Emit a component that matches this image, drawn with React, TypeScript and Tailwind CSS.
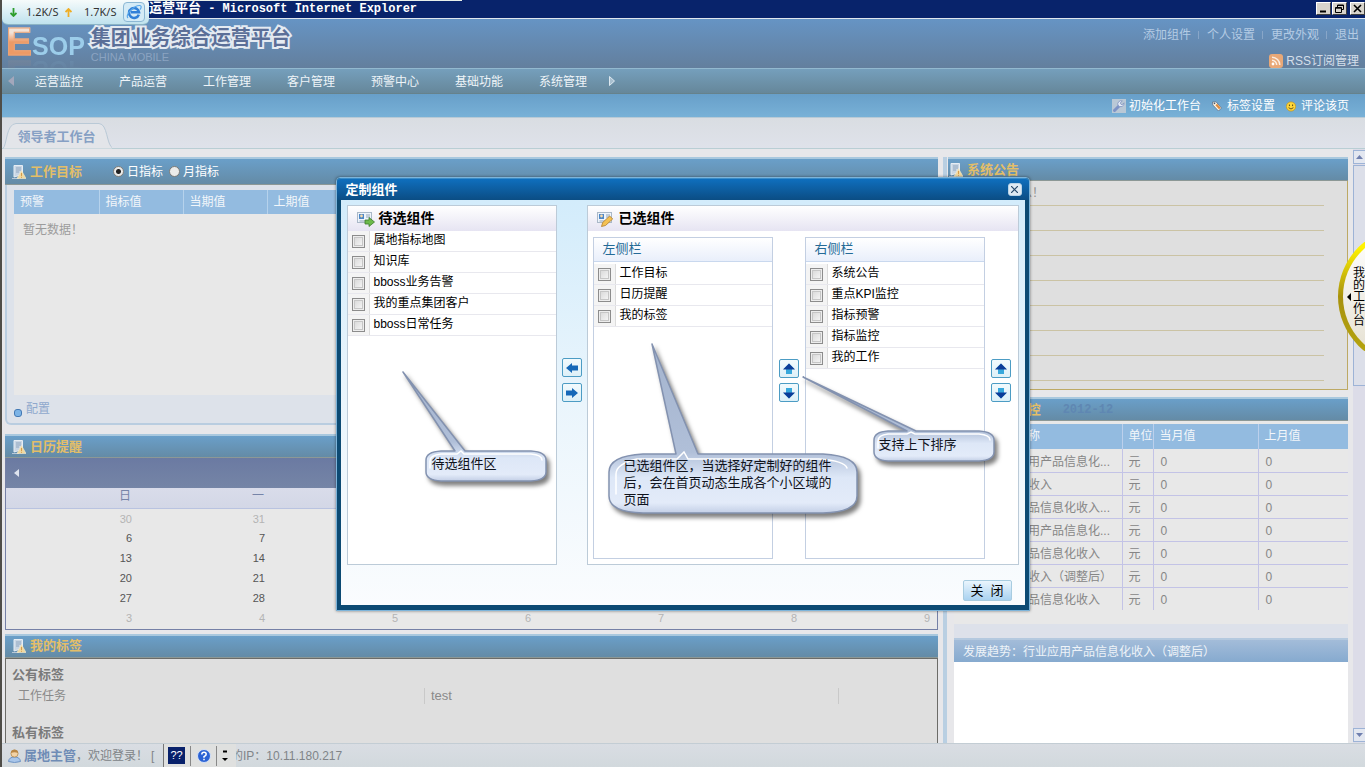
import React from "react";

const weekdays = ["日", "一", "二", "三", "四", "五", "六"];
const weeks = [
  [30, 31, 1, 2, 3, 4, 5],
  [6, 7, 8, 9, 10, 11, 12],
  [13, 14, 15, 16, 17, 18, 19],
  [20, 21, 22, 23, 24, 25, 26],
  [27, 28, 29, 30, 31, 1, 2],
  [3, 4, 5, 6, 7, 8, 9],
];
const kpis = [
  "行业应用产品信息化...",
  "信息化收入",
  "行业产品信息化收入...",
  "行业应用产品信息化...",
  "行业产品信息化收入",
  "信息化收入（调整后）",
  "行业产品信息化收入",
];
const menu = ["运营监控", "产品运营", "工作管理", "客户管理", "预警中心", "基础功能", "系统管理"];
const account = ["添加组件", "个人设置", "更改外观", "退出"];

function SheetIcon() {
  return (
    <svg className="h-[14px] w-[14px] shrink-0" viewBox="0 0 14 14">
      <path d="M2 0.5h8.500v9L2 12z" fill="#c9d6e4" stroke="#e6edf4" />
      <path d="M4 3h5M4 5h5M4 7h3" stroke="#8fa6bf" />
      <path d="M0 13.500h7" stroke="#b8c8d8" />
      <path d="M9.500 5.500 14 13.500H5z" fill="#f0d9a0" stroke="#f7ecd0" strokeWidth=".6" />
      <path d="M9.500 8v3M9.500 11.800v1" stroke="#d79a4a" />
    </svg>
  );
}

function PanelHeader({ title, className = "", children }: { title: string; className?: string; children?: React.ReactNode }) {
  return (
    <div
      className={
        "flex shrink-0 items-center border-t-2 border-b border-t-[#a9c8de] border-b-[#8c9896] bg-linear-to-b from-[#6a9fc9] to-[#648ba6] " +
        className
      }
    >
      <SheetIcon />
      <h2 className="ml-1 text-[13px] leading-4 font-bold whitespace-nowrap text-[#e3be68]">{title}</h2>
      {children}
    </div>
  );
}

function TitleBar() {
  const box =
    "flex h-[13px] w-[15px] items-center justify-center border border-t-white border-l-white border-r-[#404040] border-b-[#404040] bg-[#d8d4cc]";
  return (
    <div className="relative flex h-[19px] shrink-0 items-center border-b border-[#dfe6ee] bg-[#08236b] pl-[147px] text-white">
      <div className="absolute top-0 left-0 h-px w-[460px] bg-[#e8efe9]" />
      <h1 className="flex items-center font-['Liberation_Mono','Noto_Sans_CJK_SC',monospace] text-[12px] leading-4 font-bold whitespace-pre">
        <span className="text-[13px]">运营平台</span>
        <span> - Microsoft Internet Explorer</span>
      </h1>
      <div className="absolute top-0 left-0 z-10 flex h-[25px] w-[147px] items-center rounded-b-md rounded-tr-sm border-b border-[#8cb4c4] bg-linear-to-b from-[#f6fbfb] to-[#bfe2ee] pl-2 font-['Noto_Sans',sans-serif] text-[11px] text-[#333]">
        <svg className="h-[9px] w-[7px]" viewBox="0 0 7 9">
          <path d="M3.500 0v8M.5 5l3 3 3-3" fill="none" stroke="#2e9e2e" strokeWidth="1.800" />
        </svg>
        <span className="ml-[9px] w-[35px]">1.2K/S</span>
        <svg className="ml-1 h-[9px] w-[7px]" viewBox="0 0 7 9">
          <path d="M3.500 9V1.500M.5 4l3-3 3 3" fill="none" stroke="#efae26" strokeWidth="1.800" />
        </svg>
        <span className="ml-3 w-[34px]">1.7K/S</span>
        <span className="ml-[5px] flex h-5 w-[22px] items-center justify-center rounded-sm border border-[#8cb8d4] bg-[#d4ebf6]">
          <svg className="h-4 w-4" viewBox="0 0 16 16">
            <path d="M12.800 10.600A5 5 0 1 1 13 8.200H5" fill="none" stroke="#2f80d8" strokeWidth="2.600" />
            <path d="M2 14C-1 11 8 1 14 1.500c2 .4 1 3 0 4" fill="none" stroke="#5aa8ea" strokeWidth="1.200" />
          </svg>
        </span>
      </div>
      <div className="mb-px ml-auto flex">
        <button aria-label="最小化" className={box}>
          <svg className="h-[9px] w-[9px]" viewBox="0 0 9 9"><path d="M1 7.500h6" stroke="#000" strokeWidth="2" /></svg>
        </button>
        <button aria-label="还原" className={box + " ml-px"}>
          <svg className="h-[9px] w-[9px]" viewBox="0 0 9 9" fill="none" stroke="#000">
            <path d="M2.500 3V1h6v4.500H6.500M2.500 1.500h6" />
            <path d="M.5 3.500h6v5h-6zM.5 4.200h6" />
          </svg>
        </button>
        <button aria-label="关闭窗口" className={box + " ml-[3px]"}>
          <svg className="h-[9px] w-[9px]" viewBox="0 0 9 9"><path d="m1 1 7 7M8 1 1 8" stroke="#000" strokeWidth="1.600" /></svg>
        </button>
      </div>
    </div>
  );
}

function Banner() {
  return (
    <header className="flex h-[49px] shrink-0 justify-between bg-linear-to-b from-[#6694c4] to-[#637f9d] pr-[6px] pl-1">
      <div className="flex">
        <div className="flex items-baseline font-bold text-[#9ccdea] [-webkit-box-reflect:below_-20px_linear-gradient(transparent_50%,rgba(0,0,0,0.2))]">
          <span className="bg-linear-to-b from-[#f3e3d8] from-30% to-[#ec9a66] to-50% bg-clip-text text-[39px] leading-[46px] text-transparent [-webkit-text-stroke:1px_#eba477]">E</span>
          <span className="text-[25px] leading-[46px]">SOP</span>
        </div>
        <div className="ml-[6px] pt-[7px]">
          <div className="text-[20px] leading-6 font-bold text-[#5b6f98] [-webkit-text-stroke:4px_#e4ebf2] [paint-order:stroke_fill]">
            集团业务综合运营平台
          </div>
          <div className="mt-px text-[11px] leading-3 text-[#8ba3c1]">CHINA MOBILE</div>
        </div>
      </div>
      <div className="flex flex-col items-end pt-2 text-[#b4cbe4]">
        <div className="flex items-center leading-4">
          {account.map((a, i) => (
            <React.Fragment key={a}>
              {i > 0 && <i className="mr-2 ml-[7px] h-2 w-px bg-[#88a6c8]" />}
              <a href="#">{a}</a>
            </React.Fragment>
          ))}
        </div>
        <a href="#" className="mt-[10px] flex items-center gap-[3px] leading-4 text-[#d5dfea]">
          <svg className="h-[14px] w-[14px]" viewBox="0 0 14 14">
            <rect width="14" height="14" rx="3" fill="#e9a877" />
            <circle cx="4" cy="10" r="1.400" fill="#fff" />
            <path d="M3 6.300A4.700 4.700 0 0 1 7.700 11M3 3.200A7.800 7.800 0 0 1 10.800 11" fill="none" stroke="#fbeee2" strokeWidth="1.500" />
          </svg>
          RSS订阅管理
        </a>
      </div>
    </header>
  );
}

function NavBar() {
  return (
    <nav className="flex h-[26px] shrink-0 items-center border-t border-b border-t-[#93b9cf] border-b-[#66828c] bg-linear-to-b from-[#759fbc] to-[#66879a] pl-[6px] text-[#eef4f8]">
      <svg className="h-[10px] w-[6px]" viewBox="0 0 6 10"><path d="M6 0v10L0 5z" fill="#a3a7bb" /></svg>
      <div className="ml-[21px] flex gap-9 pt-px">
        {menu.map((m) => (
          <a key={m} href="#" className="leading-4">{m}</a>
        ))}
      </div>
      <svg className="ml-[22px] h-[10px] w-[6px]" viewBox="0 0 6 10"><path d="M.5.5v9L5.500 5z" fill="#a9c0d0" stroke="#dde8f0" /></svg>
    </nav>
  );
}

function ToolBar() {
  return (
    <div className="flex h-[23px] shrink-0 items-center justify-end bg-linear-to-b from-[#689fc9] to-[#78b1d7] pt-px pr-4 leading-4 text-white">
      <a href="#" className="flex items-center gap-[3px]">
        <svg className="h-[14px] w-[14px]" viewBox="0 0 14 14">
          <rect width="14" height="14" fill="#b9c8d6" />
          <path d="m2.500 11.500 5-5" stroke="#7d93c6" strokeWidth="3" strokeLinecap="round" />
          <path d="M12 3.800 9.800 6 8 4.200 10.300 2A3.300 3.300 0 0 0 6 6.200 3.300 3.300 0 0 0 12 3.800z" fill="#e8eefa" stroke="#7286b8" strokeWidth=".7" />
        </svg>
        初始化工作台
      </a>
      <a href="#" className="ml-[11px] flex items-center gap-[5px]">
        <svg className="h-[11px] w-[10px]" viewBox="0 0 10 11">
          <path d="M.5 1 4 .8 9.500 7 6.500 10 .8 4z" fill="#fdf5e4" stroke="#5d6f86" strokeWidth=".8" />
          <path d="m4.200 3.500 3.600 4" stroke="#e08a3c" strokeWidth="2.200" />
          <circle cx="2.500" cy="2.400" r=".8" fill="#45566c" />
        </svg>
        标签设置
      </a>
      <a href="#" className="ml-[11px] flex items-center gap-[5px]">
        <svg className="h-[11px] w-[10px]" viewBox="0 0 10 10">
          <circle cx="5" cy="5" r="4.600" fill="#ffd83a" stroke="#c99414" strokeWidth=".7" />
          <path d="M3.400 3v1.600M6.600 3v1.600" stroke="#5b4510" />
          <path d="M2.600 6.200q2.400 2.600 4.800 0" fill="none" stroke="#5b4510" strokeWidth=".9" />
        </svg>
        评论该页
      </a>
    </div>
  );
}

function TabStrip() {
  return (
    <div className="flex h-8 shrink-0 items-end border-t border-b border-t-[#b8cad6] border-b-[#b9ced4] bg-linear-to-b from-[#d9dde2] to-[#dfe2ea]">
      <button className="relative -mb-px h-[26px] w-[110px] pt-px pr-px text-[13px] font-bold text-[#86a0c4]">
        <svg className="absolute inset-0 h-full w-full" viewBox="0 0 110 26">
          <path d="M1 25.500C5 22 4 1 14 .5h83c9 .5 7 21 14 25" fill="#e3e5e9" stroke="#b9c9d6" />
        </svg>
        <span className="relative">领导者工作台</span>
      </button>
    </div>
  );
}

function GoalsPanel() {
  return (
    <section>
      <PanelHeader title="工作目标" className="h-7 pl-[7px]">
        <div className="ml-[31px] flex items-center text-[12px] text-white">
          {["日指标", "月指标"].map((l, i) => (
            <label key={l} className="mr-[6px] flex items-center gap-[3px]">
              <input
                type="radio"
                name="period"
                defaultChecked={i === 0}
                className="h-[11px] w-[11px] appearance-none rounded-full border border-[#7b7b78] bg-[#ececea] checked:bg-[radial-gradient(circle,#222_0_2px,#ececea_3px)]"
              />
              {l}
            </label>
          ))}
        </div>
      </PanelHeader>
      <div className="h-60 rounded-b-md border-2 border-t-0 border-[#b9cde0] bg-[#dde2ea] pt-[5px] pl-[7px]">
        <table className="w-full table-fixed border-collapse">
          <thead>
            <tr className="h-6 bg-[#93bbe0] text-left text-[#f2f6fa]">
              {["预警", "指标值", "当期值", "上期值"].map((h, i) => (
                <th key={h} className={"border-r border-[#b6d2ec] pl-[6px] font-normal " + (i === 0 ? "w-[85px]" : "w-[84px]")}>{h}</th>
              ))}
              <th />
            </tr>
          </thead>
          <tbody>
            <tr className="h-[181px] bg-[#e8e8e8] align-top text-[#9c9c9c]">
              <td colSpan={5} className="pt-2 pl-[9px] leading-4">暂无数据！</td>
            </tr>
          </tbody>
        </table>
        <a href="#" className="flex h-[28px] items-center gap-1 text-[#8fa9cd]">
          <svg className="mt-2 h-2 w-2" viewBox="0 0 8 8"><rect x=".5" y=".5" width="7" height="7" rx="2.500" fill="#7db4e6" stroke="#4479b4" /></svg>
          配置
        </a>
      </div>
    </section>
  );
}

function CalendarPanel() {
  return (
    <section className="mt-[9px]">
      <PanelHeader title="日历提醒" className="h-6 pl-[7px]" />
      <div className="border border-t-0 border-[#7580a6] bg-[#e8e8e8]">
        <div className="flex h-[30px] items-center bg-linear-to-b from-[#6b7aa2] to-[#7585a6] pl-2">
          <button aria-label="上个月">
            <svg className="h-2 w-[5px]" viewBox="0 0 5 8"><path d="M5 0v8L0 4z" fill="#dfe4ee" /></svg>
          </button>
        </div>
        <table className="w-full table-fixed border-collapse text-right">
          <thead>
            <tr className="h-5 border-b border-[#b9c3e0] bg-linear-to-b from-[#d9dcea] to-[#d3d7e6] text-[#7684a8]">
              {weekdays.map((d) => (
                <th key={d} className="pr-2 pb-1 leading-4 font-normal">{d}</th>
              ))}
            </tr>
          </thead>
          <tbody className="text-[11px] text-[#555]">
            {weeks.map((w, r) => (
              <tr key={r} className="h-5">
                {w.map((d, c) => {
                  const outside = (r === 0 && d > 20) || (r > 3 && d < 20);
                  return (
                    <td key={c} className={"pr-[7px] " + (outside ? "text-[#b4b4b4]" : "")}>{d}</td>
                  );
                })}
              </tr>
            ))}
          </tbody>
        </table>
      </div>
    </section>
  );
}

function TagsPanel() {
  return (
    <section className="mt-1 flex min-h-0 flex-1 flex-col">
      <PanelHeader title="我的标签" className="h-6 pl-[7px]" />
      <div className="min-h-0 flex-1 overflow-hidden border border-b-0 border-[#6c6c68] bg-[#dfdfdf] px-[6px] pt-2 text-[#8a8a8a]">
        <h3 className="text-[13px] leading-4 font-bold text-[#7a7a7a]">公有标签</h3>
        <div className="mt-1 flex items-center pl-[6px] leading-[18px]">
          <a href="#" className="w-[406px]">工作任务</a>
          <i className="h-4 w-px bg-[#c9c9c9]" />
          <a href="#" className="w-[413px] pl-[6px] text-[13px]">test</a>
          <i className="h-4 w-px bg-[#c9c9c9]" />
        </div>
        <h3 className="mt-5 text-[13px] leading-4 font-bold text-[#7a7a7a]">私有标签</h3>
      </div>
    </section>
  );
}

function RightColumn() {
  return (
    <aside className="flex w-[400px] shrink-0 flex-col">
      <PanelHeader title="系统公告" className="h-6 pl-px" />
      <div className="border border-t-0 border-[#bda964] bg-[#dfdfdf] pr-[23px] pb-2 pl-[11px]">
        {Array.from({ length: 8 }, (_, i) => (
          <div key={i} className="h-[25px] border-b border-[#cbc3a4] leading-6 text-[#909090]">
            {i === 0 ? "暂无公告信息！" : ""}
          </div>
        ))}
      </div>
      <PanelHeader title="重点KPI监控" className="mt-[7px] h-6 pl-px">
        <span className="ml-[22px] font-['Liberation_Mono',monospace] font-bold text-[#5f87b2]">2012-12</span>
      </PanelHeader>
      <div className="ml-[6px] border-b-[14px] border-[#dde1ea] bg-[#e8e8e8] pt-[3px] pb-[14px] text-[#868686]">
        <table className="w-full table-fixed border-collapse">
          <thead>
            <tr className="h-[25px] bg-[#93bbe0] text-left text-[#f2f6fa]">
              <th className="w-[168px] border-r border-[#bcd0ec] pb-[2px] pl-[38px] font-normal">指标名称</th>
              <th className="w-[31px] border-r border-[#bcd0ec] pb-[2px] pl-[6px] font-normal whitespace-nowrap">单位</th>
              <th className="w-[105px] border-r border-[#bcd0ec] pb-[2px] pl-[6px] font-normal">当月值</th>
              <th className="pb-[2px] pl-[6px] font-normal">上月值</th>
            </tr>
          </thead>
          <tbody>
            {kpis.map((k, i) => (
              <tr key={i} className={"h-[23px] " + (i < 6 ? "border-b border-[#c3c3e6]" : "")}>
                <td className="border-r border-[#c3c3e6] pt-[3px] pl-[38px] whitespace-nowrap">{k}</td>
                <td className="border-r border-[#c3c3e6] pt-[3px] pl-[6px]">元</td>
                <td className="border-r border-[#c3c3e6] pt-[3px] pl-[7px]">0</td>
                <td className="pt-[3px] pl-[7px]">0</td>
              </tr>
            ))}
          </tbody>
        </table>
      </div>
      <div className="ml-[6px] flex min-h-0 flex-1 flex-col">
        <h3 className="flex h-6 shrink-0 items-center border-t-2 border-[#b4c9df] bg-linear-to-b from-[#a3bcd9] to-[#86aacf] pt-px pl-[9px] text-[#eef3f8]">
          发展趋势：行业应用产品信息化收入（调整后）
        </h3>
        <div className="flex-1 bg-white" />
      </div>
    </aside>
  );
}

function SideScroll() {
  return (
    <div className="-mt-2 ml-[5px] flex w-3 shrink-0 flex-col bg-[#dcdce8]">
      <div className="mt-px flex h-[14px] items-center justify-center border border-r-0 border-[#9db3d6] bg-[#e3e7f0]">
        <svg className="h-1 w-[7px]" viewBox="0 0 7 4"><path d="M0 4h7L3.500 0z" fill="#6f7fae" /></svg>
      </div>
      <div className="mt-px h-[221px] border border-r-0 border-[#9db3d6] bg-[#dcdfe9]" />
      <div className="mt-auto mb-px flex h-[14px] items-center justify-center border border-r-0 border-[#9db3d6] bg-[#e3e7f0]">
        <svg className="h-1 w-[7px]" viewBox="0 0 7 4"><path d="M0 0h7L3.500 4z" fill="#6f7fae" /></svg>
      </div>
    </div>
  );
}

function StatusBar() {
  return (
    <footer className="flex h-6 shrink-0 items-center border-t border-[#c3cdd4] bg-linear-to-b from-[#d9dde3] to-[#d2d9dd] pl-[6px] whitespace-nowrap text-[#808488]">
      <svg className="h-[14px] w-[13px]" viewBox="0 0 13 14">
        <path d="M.5 12.500Q1 8 6.500 8t6 4.500Q6.500 14.500 .5 12.500z" fill="#a9c6ea" stroke="#6d93c4" />
        <circle cx="6.500" cy="4.500" r="3.600" fill="#f3d3a6" stroke="#b58a4e" strokeWidth=".8" />
        <path d="M3 4Q3 .8 6.500 .8T10 4Q6.500 2.500 3 4z" fill="#b98746" />
      </svg>
      <a href="#" className="ml-[3px] text-[13px] font-bold text-[#6f8cb6]">属地主管</a>
      <span>，欢迎登录！</span>
      <span className="ml-[3px] w-3">[</span>
      <div className="relative flex h-full w-[73px] items-center gap-[5px] border-l border-[#777] bg-[#dfe0df] pl-1">
        <button className="h-[17px] w-[17px] bg-[#08216b] text-[11px] leading-[17px] text-white">??</button>
        <i className="h-5 w-px bg-[#888]" />
        <button aria-label="帮助" className="ml-px">
          <svg className="h-[14px] w-[14px]" viewBox="0 0 14 14">
            <circle cx="7" cy="7" r="6.500" fill="#2a62d4" stroke="#d5e2f8" />
            <path d="M4.800 5.500Q4.800 3.300 7 3.300t2.200 2Q9.200 6.600 7 7.600v1.100M7 9.700v1.500" fill="none" stroke="#fff" strokeWidth="1.500" />
          </svg>
        </button>
        <i className="h-5 w-px bg-[#888]" />
        <svg className="h-3 w-[7px]" viewBox="0 0 7 12"><path d="M1 1.500h4" stroke="#000" strokeWidth="2" /><path d="M0 8h6l-3 3z" fill="#000" /></svg>
      </div>
      <span className="-ml-[5px]">的IP：10.11.180.217</span>
    </footer>
  );
}

function DialogIcon({ kind }: { kind: "add" | "edit" }) {
  return (
    <svg className="h-4 w-[18px]" viewBox="0 0 18 16">
      <rect x=".5" y="1.500" width="14" height="10" fill="#eef4fb" stroke="#aab8c8" />
      <rect x="2" y="3" width="5" height="5" fill="#4d87c7" />
      <circle cx="4.500" cy="5" r="1.400" fill="#f5d9ac" />
      <path d="M9 4h4M9 6h4M2.500 10h6" stroke="#93a4b8" />
      {kind === "add" ? (
        <path d="M8 9h4V6.500l5.500 4.500-5.500 4.500V13H8z" fill="#6cba4c" stroke="#3c7c2c" strokeWidth=".8" />
      ) : (
        <path d="m4.500 15.500 1.200-4 7-6.500 3 3-7.200 6.500z" fill="#f4c153" stroke="#b17d2b" strokeWidth=".8" />
      )}
    </svg>
  );
}

function CheckList({ items }: { items: string[] }) {
  return (
    <ul>
      {items.map((t) => (
        <li key={t} className="h-[21px] border-b border-[#e8e8ee]">
          <label className="flex h-full items-center">
            <span className="flex h-full w-[22px] items-center border-r border-[#dcdcdc] bg-[#f4f4f4] pl-1">
              <input
                type="checkbox"
                className="h-[13px] w-[13px] appearance-none border border-[#8c8c8c] bg-linear-to-br from-[#d4d4d4] to-[#fbfbfb] shadow-[inset_0_0_0_1px_#ededed,inset_0_0_0_2px_#c6c6c6] checked:bg-[#3a78b8]"
              />
            </span>
            <span className="pb-[2px] pl-1 leading-4">{t}</span>
          </label>
        </li>
      ))}
    </ul>
  );
}

const arrows = {
  left: "M2 8 8 3v2.500h6v5H8V13z",
  right: "M14 8 8 3v2.500H2v5h6V13z",
  up: "M8 2.500 13.500 8H11v5H5V8H2.500z",
  down: "M8 13.500 13.500 8H11V3H5v5H2.500z",
};

function ArrowButton({ dir, label }: { dir: keyof typeof arrows; label: string }) {
  const lateral = dir === "left" || dir === "right";
  return (
    <button
      aria-label={label}
      className="flex h-[19px] w-5 items-center justify-center rounded-[2px] border border-[#4c9cc4] bg-linear-to-b from-[#f2fafd] to-[#ddf0f8]"
    >
      <svg className="h-4 w-4" viewBox="0 0 16 16">
        <path d={arrows[dir]} fill={lateral ? "#1668b8" : "#38a8dc"} />
        {dir === "up" && <path d="M8 2.500 14 8.500H2z" fill="#0c3c98" />}
        {dir === "down" && <path d="M8 13.500 14 7.500H2z" fill="#0c3c98" />}
      </svg>
    </button>
  );
}

function SideList({ title, items }: { title: string; items: string[] }) {
  return (
    <div className="h-[322px] w-[180px] border border-[#c3cfe2] bg-white">
      <h4 className="mb-[2px] h-6 border-b border-[#c9d8ee] bg-linear-to-b from-white to-[#e9effb] pl-[9px] text-[13px] leading-[22px] text-[#246a96]">
        {title}
      </h4>
      <CheckList items={items} />
    </div>
  );
}

interface CalloutProps {
  id: string;
  place: string;
  size: string;
  view: string;
  shape: string;
  gloss: string;
  text: React.ReactNode;
  textPlace: string;
}

function Callout({ id, place, size, view, shape, gloss, text, textPlace }: CalloutProps) {
  return (
    <div className={"pointer-events-none absolute " + place + " " + size}>
      <svg className="absolute inset-0 h-full w-full overflow-visible drop-shadow-[3px_4px_2px_rgba(0,0,0,0.5)]" viewBox={view}>
        <defs>
          <linearGradient id={id} x1="0" y1="0" x2="0" y2="1">
            <stop offset="0" stopColor="#a4b4ce" />
            <stop offset=".64" stopColor="#b0bfd8" />
            <stop offset=".79" stopColor="#dde7f7" />
            <stop offset=".94" stopColor="#e3ebf9" />
            <stop offset="1" stopColor="#c3cfe6" />
          </linearGradient>
        </defs>
        <path d={shape} fill={"url(#" + id + ")"} stroke="#8392b0" strokeWidth="1.500" strokeLinejoin="round" />
        <path d={gloss} fill="none" stroke="#fff" strokeWidth="1.500" strokeLinecap="round" />
      </svg>
      <p className={"absolute text-[13px] leading-[17px] text-[#10131c] " + textPlace}>{text}</p>
    </div>
  );
}

function WidgetDialog() {
  return (
    <div
      role="dialog"
      aria-label="定制组件"
      className="absolute top-[177px] left-1/2 z-20 -ml-px w-[694px] -translate-x-1/2 rounded-t-sm border border-[#7db4da] bg-[#0c4a73] px-1 pb-[5px] text-black shadow-[0_0_3px_rgba(0,0,0,0.5)]"
    >
      <div className="-mx-1 flex h-[22px] items-center justify-between rounded-t-sm border-t border-[#3a8cc8] bg-linear-to-b from-[#0f6fbe] to-[#0b4d84] pr-[7px] pl-[9px]">
        <h2 className="text-[13px] font-bold text-white">定制组件</h2>
        <button aria-label="关闭" className="flex h-[13px] w-[14px] items-center justify-center rounded-[3px] border border-[#b9d4e8] bg-[#dfeaf3]">
          <svg className="h-[7px] w-[7px]" viewBox="0 0 7 7"><path d="m0 0 7 7M7 0 0 7" stroke="#27496b" strokeWidth="1.200" /></svg>
        </button>
      </div>
      <div className="bg-linear-to-b from-[#d3ecfb] via-[#eaf5fc] to-[#fafcfe] px-[6px] pt-[5px] pb-1">
        <div className="flex">
          <section className="h-[360px] w-[210px] border border-[#bccbd8] bg-white">
            <h3 className="flex h-[25px] items-center gap-1 bg-linear-to-b from-white to-[#e6e4f2] pl-[9px] text-[14px] font-bold">
              <DialogIcon kind="add" />
              待选组件
            </h3>
            <CheckList items={["属地指标地图", "知识库", "bboss业务告警", "我的重点集团客户", "bboss日常任务"]} />
          </section>
          <div className="flex w-[30px] flex-col items-center gap-[6px] pt-[153px]">
            <ArrowButton dir="left" label="移出" />
            <ArrowButton dir="right" label="移入" />
          </div>
          <section className="h-[360px] flex-1 border border-[#bccbd8] bg-white">
            <h3 className="flex h-[25px] items-center gap-1 bg-linear-to-b from-white to-[#e6e4f2] pl-[9px] text-[14px] font-bold">
              <DialogIcon kind="edit" />
              已选组件
            </h3>
            <div className="flex pt-[6px] pl-[5px]">
              <SideList title="左侧栏" items={["工作目标", "日历提醒", "我的标签"]} />
              <div className="flex w-8 flex-col items-center gap-[5px] pt-[122px]">
                <ArrowButton dir="up" label="左侧栏上移" />
                <ArrowButton dir="down" label="左侧栏下移" />
              </div>
              <SideList title="右侧栏" items={["系统公告", "重点KPI监控", "指标预警", "指标监控", "我的工作"]} />
              <div className="flex w-8 flex-col items-center gap-[5px] pt-[122px]">
                <ArrowButton dir="up" label="右侧栏上移" />
                <ArrowButton dir="down" label="右侧栏下移" />
              </div>
            </div>
          </section>
        </div>
        <div className="flex justify-end pt-[15px] pr-[7px]">
          <button className="h-[21px] w-[49px] rounded-[2px] border border-[#a8cce0] bg-linear-to-b from-[#eaf5fd] to-[#a9d2f0] text-[13px] leading-[18px] whitespace-pre">关  闭</button>
        </div>
      </div>

      <Callout
        id="bubble-candidates"
        place="top-[192px] left-[64px]"
        size="h-[116px] w-[148px]"
        view="0 0 148 116"
        shape="M2 2 L64 81 H130 Q145 82 145 90 V102 Q145 110 130 111 H40 Q25 110 25 102 V90 Q25 82 40 81 H54 Z"
        gloss="M29 98V91Q29 85 40 84H56L60 81L63 84H130Q141 85 141 90"
        text="待选组件区"
        textPlace="top-[85px] left-[31px]"
      />
      <Callout
        id="bubble-selected"
        place="top-[164px] left-[270px]"
        size="h-[174px] w-[254px]"
        view="0 0 254 174"
        shape="M45 2 L91 112 H216 Q250 114 250 130 V154 Q250 170 216 171 H36 Q2 170 2 154 V130 Q2 114 36 112 H69 Z"
        gloss="M9 152V132Q9 122 30 117H70L77 110L81 117H212Q238 119 240 126"
        text="已选组件区，当选择好定制好的组件后，会在首页动态生成各个小区域的页面"
        textPlace="top-[115px] left-[17px] w-[210px]"
      />
      <Callout
        id="bubble-order"
        place="top-[196px] left-[464px]"
        size="h-[92px] w-[196px]"
        view="0 0 196 92"
        shape="M2 3 L115 57 H178 Q193 58 193 66 V78 Q193 86 178 87 H87 Q73 86 73 78 V66 Q73 58 87 57 H106 Z"
        gloss="M77 74V67Q77 61 87 60H106L110 58L114 60H178Q189 61 189 66"
        text="支持上下排序"
        textPlace="top-[62px] left-[78px]"
      />
    </div>
  );
}

function WorkbenchHandle() {
  return (
    <div className="absolute top-[242px] right-0 z-10 h-[109px] w-[27px] overflow-hidden">
      <button className="relative -mt-[15px] block h-[139px] w-[139px] rounded-full bg-linear-to-b from-[#fff200] from-15% via-[#a8920c] via-50% to-[#b8a810] p-[5px]">
        <span className="flex h-full w-full items-center rounded-full bg-linear-to-b from-[#ffffff] to-[#e4dfd0] pl-1">
          <svg className="h-2 w-1" viewBox="0 0 4 8"><path d="M4 0v8L0 4z" fill="#000" /></svg>
          <span className="ml-[2px] w-3 text-[12px] leading-3">我的工作台</span>
        </span>
      </button>
    </div>
  );
}

export default function App() {
  return (
    <div className="relative flex h-screen flex-col overflow-hidden border-l-2 border-[#4f4d48] bg-[#e7e7ea] font-['Liberation_Sans','Noto_Sans_CJK_SC',sans-serif] text-[12px]">
      <TitleBar />
      <Banner />
      <NavBar />
      <ToolBar />
      <TabStrip />
      <main className="flex min-h-0 flex-1 overflow-hidden pt-2 pl-[3px]">
        <div className="flex min-w-0 flex-1 flex-col">
          <GoalsPanel />
          <CalendarPanel />
          <TagsPanel />
        </div>
        <div className="mr-px ml-[5px] w-1 shrink-0 bg-[#b9cfe2]" />
        <RightColumn />
        <SideScroll />
      </main>
      <StatusBar />
      <WorkbenchHandle />
      <WidgetDialog />
    </div>
  );
}
